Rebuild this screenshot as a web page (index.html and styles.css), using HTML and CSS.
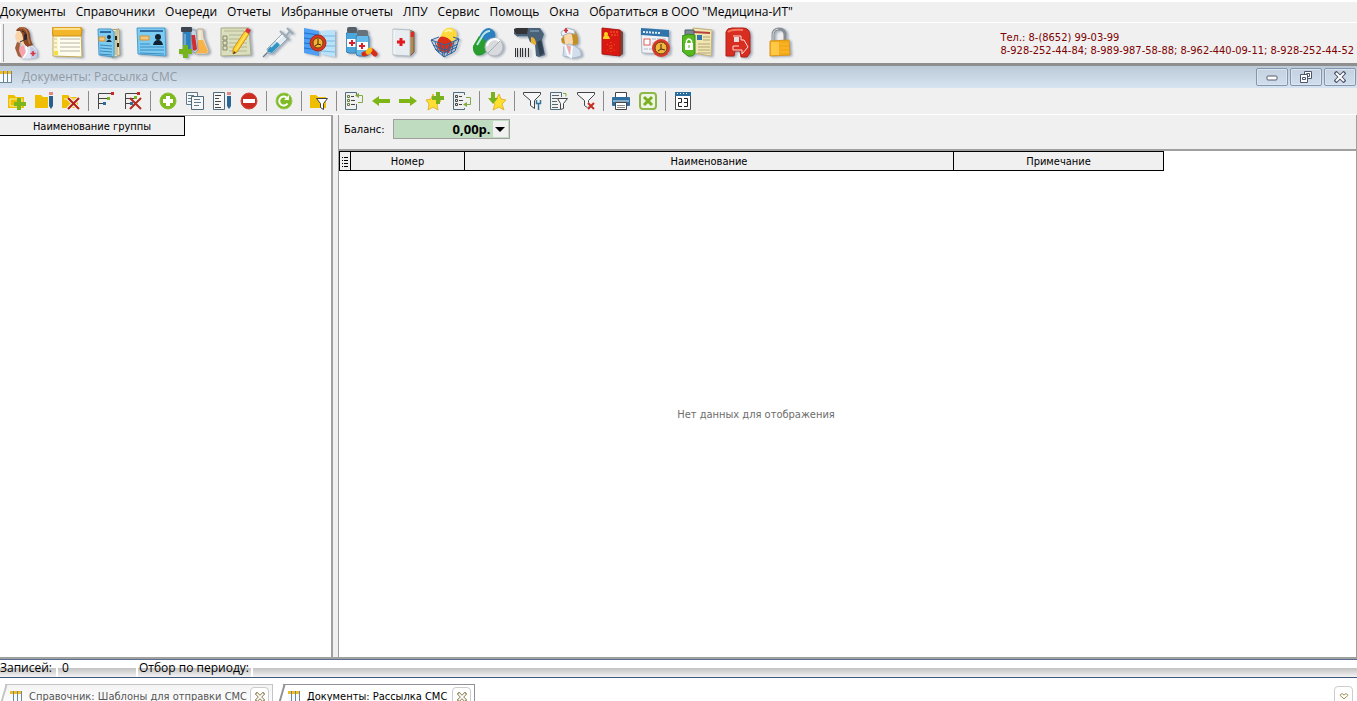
FILE: index.html
```
<!DOCTYPE html>
<html lang="ru">
<head>
    <meta charset="UTF-8">
    <meta name="viewport" content="width=device-width, initial-scale=1.0">
    <title>Документы: Рассылка СМС</title>
    <link rel="stylesheet" href="styles.css">
</head>
<body>

    <!-- Main menu -->
    <nav class="menu">
        <button>Документы</button>
        <button>Справочники</button>
        <button>Очереди</button>
        <button>Отчеты</button>
        <button>Избранные отчеты</button>
        <button>ЛПУ</button>
        <button>Сервис</button>
        <button>Помощь</button>
        <button>Окна</button>
        <button>Обратиться в ООО "Медицина-ИТ"</button>
    </nav>

    <!-- Main toolbar -->
    <div class="main-toolbar">
        <span class="grip"></span>
        <div class="big-icons">
            <button aria-label="Регистратура"><svg viewBox="0 0 32 32"><path d="M12 18l5-3 4 3q6 3 6 8v4q-7 3-17 1l-2-9z" fill="#e3e8f4"/><path d="M20 19q6 3 7 7v4l-6 1z" fill="#c3cbe2"/><path d="M9 20l5-2 2 9-4 4-3-4z" fill="#f5a3ae"/><path d="M6 6q3-4 7-1l2 9-2 5-3-4H7L5 10z" fill="#fbd3a8"/><path d="M6 4q1-4 7-4 6 1 7 7 0 6 3 11l-6 2q-4-3-4-9 0-4-3-7z" fill="#8b4a24"/><path d="M9 1q4-1 6 1 3 3 3 9l2 6" stroke="#b5714a" stroke-width="1.500" fill="none"/><path d="M7 15l-2 6 3 8 4 2-3-7 1-8z" fill="#a2603a"/><path d="M12 4q6 2 4 8l-6 3" stroke="#2c2a30" fill="none"/><rect x="14" y="7" width="3" height="6" rx="1" fill="#2c2a30"/><path d="M16 19l1 6-4 6" stroke="#fff" fill="none" stroke-width="1.500"/><path d="M23 24v5m-2.500-2.500h5" stroke="#d8303c" stroke-width="1.500"/></svg></button>
            <button aria-label="Расписание"><svg viewBox="0 0 32 32"><path d="M1 2h28l1 28-29-1z" fill="#fffdee" stroke="#c3ab52"/><path d="M0 2q0-2 2-2h26q2 0 2 3l-1 6H1z" fill="#f3b52c" stroke="#c8901a"/><path d="M2 2h26" stroke="#ffe08a" stroke-width="2"/><path d="M2 10h4v18H2z" fill="#fff7c8"/><path d="M8 12h20M8 16h20M8 20h20M8 24h20" stroke="#b7b5a6"/><path d="M2 12h3m-3 4h3m-3 4h3" stroke="#c8c4a8"/><rect x="2" y="24" width="4" height="4" fill="#f4e03c"/></svg></button>
            <button aria-label="Картотека"><svg viewBox="0 0 32 32"><path d="M17 3l8-1 1 26-8 3z" fill="#e9e3c0" stroke="#a69c70"/><path d="M21 4v24m2-25v25" stroke="#b1a67a"/><path d="M4 2h13l3 3v25L5 28z" fill="#7ecbf2" stroke="#4a9ac8"/><path d="M6 5h11" stroke="#2b6a9c" stroke-width="2"/><rect x="5" y="10" width="6" height="4" fill="#f5c977" stroke="#d2933b"/><circle cx="15" cy="10" r="2" fill="#12283d"/><path d="M12 15q3-5 6 0z" fill="#12283d"/><path d="M6 18l12 1M6 21l12 1M6 24l12 1M6 27l12 1" stroke="#3d88b8"/><path d="M22 9v4m2 3v4" stroke="#222" stroke-width="2"/></svg></button>
            <button aria-label="Карта пациента"><svg viewBox="0 0 32 32"><path d="M1 1h28l1 28-28-2z" fill="#7bcbf3" stroke="#4a9ccc"/><path d="M4 4h23" stroke="#2f6ea2" stroke-width="2"/><rect x="4" y="9" width="9" height="4" fill="#f6c77a" stroke="#d2953b"/><circle cx="22" cy="10" r="3" fill="#10222f"/><path d="M17 18q1-5 5-5t5 5z" fill="#10222f"/><path d="M4 17h10M4 20h24M4 23h24M4 26l24 1" stroke="#3f8cbd"/></svg></button>
            <button aria-label="Лаборатория"><svg viewBox="0 0 32 32"><path d="M19 2h6l1 9 5 13q0 3-3 3H17l2-16z" fill="#eadfc4" stroke="#b5ad98"/><path d="M20 13h5l5 11q0 2-2 2H18z" fill="#f7b24a"/><path d="M12 3h6l2 20q-2 4-5 2z" fill="#c7d6e4" stroke="#8a9fb2"/><path d="M13 8h4l2 14q-2 3-4 1z" fill="#cf2c34"/><path d="M5 3h8v19q-4 5-8 0z" fill="#2d82bd" stroke="#7790a6"/><rect x="3" y="0" width="11" height="5" rx="1" fill="#3d4551"/><path d="M7 7v12M22 4v9" stroke="#fff" opacity=".6"/><path d="M5 18h5v4h4v5h-4v4H5v-4H1v-5h4z" fill="#76b41b"/></svg></button>
            <button aria-label="Записи"><svg viewBox="0 0 32 32"><path d="M1 1h28l2 27-30 1z" fill="#dcdfbd" stroke="#a9ab86"/><path d="M9 8h18M9 12h18M9 16h18M9 20h18M9 24h18M4 4h20" stroke="#b2b592"/><path d="M3 9h4v4H3zm0 5h4v4H3zm0 5h4v4H3z" fill="none" stroke="#85896a"/><path d="M13 22L25 4l4 3-12 18-4 2z" fill="#ffd02e" stroke="#cf9018"/><path d="M16 23L27 6" stroke="#fff07f"/><path d="M25 4l2-3 4 2-2 4z" fill="#d8323a"/><path d="M13 27l1-3 2 2z" fill="#40372b"/></svg></button>
            <button aria-label="Прививки"><svg viewBox="0 0 32 32"><path d="M1 30l6-6" stroke="#68808d" stroke-width="1.500"/><path d="M5 22L21 6l5 5L10 27l-4-1z" fill="#e3ebf0" stroke="#93a9b6"/><path d="M6 22l8-8 4 4-8 8-4-1z" fill="#3192c4"/><path d="M18 4l9 9M24 9l4-5m-3-3l6 6" stroke="#9aa9b3" stroke-width="2"/><path d="M9 20L21 8" stroke="#fff" stroke-width="1.500" opacity=".8"/></svg></button>
            <button aria-label="График приема"><svg viewBox="0 0 32 32"><path d="M0 1l15 3v25L0 26z" fill="#4c9ff2"/><path d="M17 4l14-1v27l-14-3z" fill="#b9e2fb"/><path d="M0 6l15 2M0 11l15 2M0 16l15 2M0 21l15 2" stroke="#1f6fd0"/><path d="M17 9h14M17 14h14M17 19h14M17 24l14 1" stroke="#79b9e4"/><circle cx="14" cy="16" r="8" fill="#d9371e" stroke="#a52a18"/><circle cx="14" cy="16" r="5" fill="#f3b537" stroke="#6e4310"/><path d="M14 12v5l3 1m-3-1l-3 2" stroke="#452a08" fill="none"/></svg></button>
            <button aria-label="Лекарства"><svg viewBox="0 0 32 32"><rect x="0" y="5" width="12" height="21" rx="3" fill="#4ba6dc" stroke="#3b7fae"/><rect x="1" y="0" width="10" height="6" rx="2" fill="#555f68"/><rect x="1" y="12" width="11" height="8" fill="#fff"/><rect x="10" y="8" width="13" height="21" rx="3" fill="#65bbea" stroke="#3b7fae"/><rect x="11" y="3" width="11" height="6" rx="2" fill="#68727a"/><rect x="11" y="15" width="11" height="8" fill="#fff"/><path d="M6 13v6m-3-3h6M16 16v6m-3-3h6" stroke="#d9202a" stroke-width="2"/><path d="M18 27l3-1m5-2l3 3" stroke="#d82b18" stroke-width="5" stroke-linecap="round"/><path d="M22 25l2-2" stroke="#f4ba19" stroke-width="5" stroke-linecap="round"/></svg></button>
            <button aria-label="Медкарта"><svg viewBox="0 0 32 32"><path d="M21 3l5 2v20l-4 4z" fill="#b08a55" stroke="#7c5a32"/><path d="M22 5h4v5h-4z" fill="#dc2f23"/><path d="M5 2l17 1v26L5 28z" fill="#e7edf1" stroke="#b4bfc6"/><path d="M6 3v24" stroke="#fff"/><path d="M13 11v8m-4-4h8" stroke="#e21a20" stroke-width="3"/></svg></button>
            <button aria-label="Аптека"><svg viewBox="0 0 32 32"><path d="M12 6q3-6 10-5 7 3 4 10l-4 6-12-6z" fill="#ffd83a"/><path d="M10 10q6-2 13 6l-4 10-9-2q-6-7 0-14z" fill="#dd3018"/><path d="M15 5q3-3 7-1" stroke="#fff6a8" stroke-width="2" fill="none"/><path d="M1 13l14 5 14-6-4 12-11 6-8-7zM15 18l-1 12M5 15l4 11M10 17l3 12M20 16l-3 12m7-14l-3 13M3 18l12 5 13-6M5 22l9 4 13-6M1 13l8-3m20 2l-6-2" fill="none" stroke="#2b639c"/></svg></button>
            <button aria-label="Препараты"><svg viewBox="0 0 32 32"><path d="M7 10q4-9 10-9 8 2 6 11l-7 10z" fill="#2a80c0"/><path d="M7 9l11 8-4 8q-5 5-10 3-4-4-3-9z" fill="#2a9d30"/><path d="M5 18l6-10q3-4 7-4" stroke="#b8e8e0" stroke-width="2" fill="none"/><circle cx="22" cy="20" r="9" fill="#d8dade" stroke="#b4b6bc"/><path d="M15 19q1-6 8-7 3 0 5 3" stroke="#fff" stroke-width="2" fill="none"/><path d="M16 26l12-12" stroke="#a9adb3"/></svg></button>
            <button aria-label="Сканер"><svg viewBox="0 0 32 32"><path d="M0 2l3-1h23l4 6-2 6 3 15-6 2-3-1-1-12-5-2-2-5H4L0 7z" fill="#4a6277"/><path d="M0 2l3-1h11l-1 6H2z" fill="#343335"/><path d="M4 9h10v1H4z" fill="#8ca4b4"/><path d="M23 15l4-2 3 13-4 3z" fill="#30404e"/><path d="M17 10q5 0 5 8l-5-2z" fill="#efb02b"/><path d="M16 4h9" stroke="#94b2c5"/><path d="M1.500 21v9m2-9v9m3-9v9m2-9v9m3-9v9m3-9v9" stroke="#333"/></svg></button>
            <button aria-label="Медсестра"><svg viewBox="0 0 32 32"><path d="M7 6q4-6 12-2 4 5 3 13l-7 2q-3-6-8-10z" fill="#c08f2c"/><path d="M5 12l3-3 1 8-3-1z" fill="#c08f2c"/><path d="M8 8q5-4 8 0l1 7-1 5-4 1-3-5z" fill="#fbd8ac"/><path d="M5 5l6-4 7 2 1 4-6-1-7 3z" fill="#eef3fa" stroke="#a8b5c4"/><path d="M10 1v5M8 3.500h4" stroke="#d72226" stroke-width="1.500"/><path d="M8 19l5-2 6 2q6 3 6 7v3l-7 2-11-2z" fill="#d3deec" stroke="#a9b8ca"/><path d="M10 18l6 2-2 8z" fill="#f2a9a6"/><path d="M9 18l3 10 3 2 1-11" fill="none" stroke="#f7fbff" stroke-width="2"/></svg></button>
            <button aria-label="Паспорт"><svg viewBox="0 0 32 32"><path d="M22 3l3 2v22l-3 2z" fill="#784437"/><path d="M4 1l18 2v26L4 27z" fill="#d91812" stroke="#b01812"/><circle cx="8" cy="7" r="2" fill="#ffd421"/><path d="M5 12q0-4 3-4t4 4z" fill="#ffd421"/><path d="M12 5h8m-7 3h7" stroke="#f36b28" stroke-dasharray="2 1"/><path d="M9 17l8 7m0-7l-8 7m4-9v11" stroke="#ee6a22" stroke-dasharray="1 2"/></svg></button>
            <button aria-label="Журнал"><svg viewBox="0 0 32 32"><path d="M1 3l27 1 1 23-27-1z" fill="#f1f3f7" stroke="#a9b5c1"/><path d="M1 1l28 2v7L1 8z" fill="#2f74aa"/><path d="M3 5l17 1" stroke="#dfeaf3" stroke-width="2" stroke-dasharray="2 1"/><rect x="4" y="12" width="6" height="6" fill="#fff" stroke="#dd5f58"/><path d="M12 12h15M12 16h6M4 22h8" stroke="#b2bac4" stroke-dasharray="4 1"/><circle cx="21" cy="21" r="9" fill="#d93a2a"/><circle cx="21" cy="21" r="6" fill="#f2b63c" stroke="#664015"/><path d="M21 17v5l-3 2m3-2l4 1" stroke="#3f270b" fill="none"/></svg></button>
            <button aria-label="Электронная подпись"><svg viewBox="0 0 32 32"><path d="M11 1l19 2-1 26-18-3z" fill="#f0e6b4" stroke="#c2b27c"/><path d="M12 5l16 1" stroke="#b8433a" stroke-width="2"/><rect x="15" y="8" width="5" height="5" fill="#2c76a8"/><path d="M21 10h7m-7 3h7M16 17h12M16 20h12M16 23h12M16 26h12" stroke="#b5a474"/><path d="M3 3h9v8H3z" fill="#7b8894" stroke="#4c5a66"/><path d="M0 9q6-3 13-1v18q-2 4-7 3l-6-5z" fill="#55b81e" stroke="#37861b"/><path d="M3 16h8v7H3z" fill="#fff"/><path d="M4.500 17v-3q2-4 5 0v3" fill="none" stroke="#fff" stroke-width="1.500"/><path d="M7 18v3" stroke="#55b81e"/></svg></button>
            <button aria-label="Выход"><svg viewBox="0 0 32 32"><path d="M2 5q1-4 6-4h11q7 0 7 8v17l-3 4h-6l-1-6h-5l-1 5H2z" fill="#d82d21" stroke="#b02219"/><path d="M4 5q3-3 15-2" fill="none" stroke="#f57a61" stroke-width="2"/><path d="M10 10h5v5h-5z" fill="#e8e0de"/><path d="M9 9h8v4h3l4 7-6 7v-4H9v-4h6" fill="none" stroke="#ffddd5"/></svg></button>
            <button aria-label="Блокировка"><svg viewBox="0 0 32 32"><path d="M7 15V8q0-6 6-6t6 6v7" fill="none" stroke="#868d94" stroke-width="3"/><path d="M7 14V8q0-5 5-6" fill="none" stroke="#d8dde0"/><path d="M4 14l19-1 1 15-20 1z" fill="#f6aa16" stroke="#dc951b"/><path d="M5 15h8v13H5z" fill="#ffc845"/><path d="M14 17h9M14 21h9M14 25h9" stroke="#fbb83a"/></svg></button>
        </div>
        <div class="phones">Тел.: 8-(8652) 99-03-99<br>8-928-252-44-84; 8-989-987-58-88; 8-962-440-09-11; 8-928-252-44-52</div>
    </div>

    <!-- Window caption -->
    <header class="caption">
        <svg class="grid-icon" viewBox="0 0 12 12"><path d="M0 0h12v12H0z" fill="#6d8799"/><path d="M0 0h3v3H0zm4 0h3v3H4zm4 0h3v3H8z" fill="#f0bd24"/><path d="M0 3h3v8H0zm4 0h3v8H4zm4 0h3v8H8z" fill="#f6fafc"/></svg>
        <h1>Документы: Рассылка СМС</h1>
        <div class="caption-buttons">
            <button aria-label="Свернуть"><svg viewBox="0 0 12 12"><rect x="1" y="5" width="10" height="4" rx="1" fill="#fff" stroke="#555c6c"/></svg></button>
            <button aria-label="Восстановить"><svg viewBox="0 0 12 12"><path d="M4.500.5h7v7h-7z" fill="#fff" stroke="#4e566b"/><path d="M6.500 2.500h3v3h-3z" fill="none" stroke="#4e566b"/><path d="M.5 3.500h7v8h-7z" fill="#fff" stroke="#4e566b"/><path d="M2.500 6.500h3v2h-3z" fill="none" stroke="#4e566b"/></svg></button>
            <button aria-label="Закрыть"><svg viewBox="0 0 12 12"><path d="M1 1l10 10m0-10L1 11" stroke="#4e566b" stroke-width="4"/><path d="M2 2l8 8m0-8l-8 8" stroke="#fff" stroke-width="2"/></svg></button>
        </div>
    </header>

    <!-- Document toolbar -->
    <div class="doc-toolbar">
        <button aria-label="Добавить группу"><svg viewBox="0 0 20 20"><path d="M1 4h6l2 2h8v11H1z" fill="#efbe00"/><path d="M3 8h12v7H3z" fill="none" stroke="#fff2a8"/><path d="M10 7h4v4h5v4h-5v4h-4v-4H7v-4h3z" fill="#7ab51d"/></svg></button>
        <button aria-label="Изменить группу"><svg viewBox="0 0 20 20"><path d="M1 4h6l2 2h8v11H1z" fill="#efbe00"/><path d="M14 1h5v17h-5z" fill="#f0f0f0"/><path d="M15 1h4v3h-4z" fill="#e38983"/><path d="M15 5h4v10l-2 3-2-3z" fill="#285f8c"/></svg></button>
        <button aria-label="Удалить группу"><svg viewBox="0 0 20 20"><path d="M1 4h6l2 2h8v11H1z" fill="#efbe00"/><path d="M3 8h12" stroke="#fff2a8"/><path d="M7 7l11 11M18 7L7 18" stroke="#f0f0f0" stroke-width="4"/><path d="M7 7l11 11M18 7L7 18" stroke="#b41d16" stroke-width="2"/></svg></button>
        <span class="sep"></span>
        <button aria-label="Развернуть"><svg viewBox="0 0 20 20"><path d="M2.500 18V2.500H15M2.500 7.500H11M2.500 12.500H7" fill="none" stroke="#444"/><path d="M15 1h3v3h-3z" fill="#c9281f"/><path d="M11 6h3v3h-3z" fill="#79b51e"/><path d="M7 11h3v3H7z" fill="#286e9f"/></svg></button>
        <button aria-label="Свернуть дерево"><svg viewBox="0 0 20 20"><path d="M2.500 18V2.500H15M2.500 7.500H11M2.500 12.500H7" fill="none" stroke="#444"/><path d="M14 1h3v3h-3z" fill="#c9281f"/><path d="M11 5h3v3h-3z" fill="#79b51e"/><path d="M7 11h3v3H7z" fill="#286e9f"/><path d="M7 7l11 11M18 7L7 18" stroke="#b52c1f" stroke-width="2"/></svg></button>
        <span class="sep"></span>
        <button aria-label="Добавить"><svg viewBox="0 0 20 20"><circle cx="10" cy="10" r="8" fill="#80b91d" stroke="#8cbf3a"/><path d="M10 5v10M5 10h10" stroke="#fff" stroke-width="4"/></svg></button>
        <button aria-label="Копировать"><svg viewBox="0 0 20 20"><path d="M1.500 1.500h11v12h-11z" fill="#f7f7f7" stroke="#607c8c"/><path d="M3 4.500h6m-6 3h3m-3 3h3" stroke="#607c8c"/><path d="M6.500 5.500h12v13h-12z" fill="#f7f7f7" stroke="#506b7b"/><path d="M9 8.500h6m-6 3h7m-7 3h5" stroke="#607c8c"/></svg></button>
        <button aria-label="Изменить"><svg viewBox="0 0 20 20"><path d="M1.500 1.500h11v17h-11z" fill="#f7f7f7" stroke="#506b7b"/><path d="M3 4.500h6m-6 3h4m-4 3h6m-6 3h4m-4 3h6" stroke="#444"/><path d="M15 1h4v3h-4z" fill="#e38983"/><path d="M15 5h4v10l-2 3-2-3z" fill="#286695"/></svg></button>
        <button aria-label="Удалить"><svg viewBox="0 0 20 20"><circle cx="10" cy="10" r="8" fill="#cc2c20" stroke="#cf4a40"/><path d="M4 10h12" stroke="#fff" stroke-width="4"/></svg></button>
        <span class="sep"></span>
        <button aria-label="Обновить"><svg viewBox="0 0 20 20"><circle cx="10" cy="10" r="8" fill="#7ebb24" stroke="#9ac95a"/><path d="M13.500 12.500a4.500 4.500 0 1 1-1-6" fill="none" stroke="#fff" stroke-width="2"/><path d="M15 4v5h-5z" fill="#fff"/></svg></button>
        <span class="sep"></span>
        <button aria-label="Фильтр по группе"><svg viewBox="0 0 20 20"><path d="M1 4h6l2 2h8v11H1z" fill="#efbe00"/><path d="M7.500 7.500h11l-4 5v6l-3-2v-4z" fill="#fff" stroke="#3e4246"/></svg></button>
        <span class="sep"></span>
        <button aria-label="Загрузить список"><svg viewBox="0 0 20 20"><path d="M12.500 4V1.500h-11v17h11V13" fill="none" stroke="#4f6d7e"/><path d="M3.500 4.500h2v2h-2zm0 4h2v2h-2zm0 4h2v2h-2z" fill="none" stroke="#657c3c"/><path d="M7 5.500h3m-3 4h4m-4 4h4" stroke="#444"/><path d="M14 11.500h4.500v-7H14" fill="none" stroke="#83aa43"/><path d="M15 2v5l-4-2.500z" fill="#83aa43"/></svg></button>
        <button aria-label="Назад"><svg viewBox="0 0 20 20"><path d="M1 10l7-5v3h11v4H8v3z" fill="#7eb615"/></svg></button>
        <button aria-label="Вперед"><svg viewBox="0 0 20 20"><path d="M19 10l-7-5v3H1v4h11v3z" fill="#7eb615"/></svg></button>
        <button aria-label="В избранное"><svg viewBox="0 0 20 20"><path d="M8 3l2 5 6 2-4 4 1 5-5-3-5 3 1-6-3-4 5-1z" fill="#ffdf35" stroke="#e3b52e"/><path d="M11 1h4v4h4v4h-4v4h-4V9H7V5h4z" fill="#79b21c"/></svg></button>
        <button aria-label="Выгрузить список"><svg viewBox="0 0 20 20"><path d="M12.500 4V1.500h-11v17h11V17" fill="none" stroke="#4f6d7e"/><path d="M3.500 4.500h2v2h-2zm0 4h2v2h-2zm0 4h2v2h-2z" fill="none" stroke="#444"/><path d="M7 5.500h3m-3 4h4m-4 4h3" stroke="#444"/><path d="M14 6.500h4.500v7H14" fill="none" stroke="#83aa43"/><path d="M15 11v5l-4-2.500z" fill="#83aa43"/></svg></button>
        <span class="sep"></span>
        <button aria-label="Из избранного"><svg viewBox="0 0 20 20"><path d="M12 3l2 5 5 1-4 4 2 6-5-3-6 3 2-6-4-5 6-1z" fill="#ffe02f" stroke="#e3b52e"/><path d="M4 1h4v6h3l-5 6-5-6h3z" fill="#79b21c"/></svg></button>
        <span class="sep"></span>
        <button aria-label="Настроить фильтр"><svg viewBox="0 0 20 20"><path d="M1.500 1.500h17v2l-6 6v8l-4-3v-5l-7-6z" fill="#f7f7f7" stroke="#414448"/><path d="M14 9h5v10h-5z" fill="#f0f0f0"/><path d="M14.500 9v3.500h4V9M16.500 12v7" fill="none" stroke="#34749b" stroke-width="1.500"/></svg></button>
        <button aria-label="Фильтр"><svg viewBox="0 0 20 20"><path d="M12.500 6V1.500h-11v17H11" fill="none" stroke="#4f6d7e"/><path d="M3 4.500h7m-7 3h5m-5 3h5m-5 3h6m-6 3h6" stroke="#59636a"/><path d="M14 2.500h3v3" fill="none" stroke="#7da936"/><path d="M8.500 7.500h10l-4 5v5l-3 1v-6z" fill="#f7f7f7" stroke="#414448"/></svg></button>
        <button aria-label="Снять фильтр"><svg viewBox="0 0 20 20"><path d="M1.500 1.500h17v2l-6 6v8l-4-3v-5l-7-6z" fill="#f7f7f7" stroke="#414448"/><path d="M12 12l7 7m0-7l-7 7" stroke="#f0f0f0" stroke-width="4"/><path d="M12 12l6 6m0-6l-6 6" stroke="#c52c20" stroke-width="2"/></svg></button>
        <span class="sep"></span>
        <button aria-label="Печать"><svg viewBox="0 0 20 20"><path d="M4.500 7V1.500h11V7" fill="#fff" stroke="#444"/><rect x="1" y="6" width="18" height="9" rx="1" fill="#2e6f9f"/><path d="M2 10h16" stroke="#dfe8ee"/><path d="M4.500 11.500h11v7h-11z" fill="#fff" stroke="#444"/><path d="M6 14.500h8m-8 2h8" stroke="#888"/></svg></button>
        <button aria-label="Экспорт в Excel"><svg viewBox="0 0 20 20"><rect x="2" y="2" width="16" height="16" rx="3" fill="#eff5e6" stroke="#8db747" stroke-width="2"/><path d="M6 6l8 8m0-8l-8 8" stroke="#7caf1d" stroke-width="3"/></svg></button>
        <span class="sep"></span>
        <button aria-label="Календарь"><svg viewBox="0 0 20 20"><path d="M2.500 1.500h15v17h-15z" fill="#fff" stroke="#4a4d50"/><path d="M2 1h16v4H2z" fill="#286e9f"/><path d="M4 2.500h12" stroke="#fff" stroke-dasharray="1 2"/><path d="M5 7.500h3.500v4h-3v4H9M11 7.500h3.500v8H11m0-4h3" fill="none" stroke="#222"/></svg></button>
    </div>

    <main class="panes">
        <section class="groups">
            <table class="grid groups-grid">
                <thead>
                    <tr><th>Наименование группы</th></tr>
                </thead>
            </table>
        </section>

        <section class="messages">
            <div class="balance">
                <label for="balance">Баланс:</label>
                <div class="combo">
                    <input type="text" id="balance" value="0,00р.">
                    <button aria-label="Открыть"></button>
                </div>
            </div>
            <table class="grid messages-grid">
                <thead>
                    <tr>
                        <th class="col-menu"><svg viewBox="0 0 8 12"><path d="M0 1.500h1m1 0h4M0 4.500h1m1 0h4M0 7.500h1m1 0h4M0 10.500h1m1 0h4" stroke="#000"/></svg></th>
                        <th class="col-number">Номер</th>
                        <th class="col-name">Наименование</th>
                        <th class="col-note">Примечание</th>
                    </tr>
                </thead>
            </table>
            <div class="no-data">Нет данных для отображения</div>
        </section>
    </main>

    <!-- Status bar -->
    <footer class="status">
        <span class="status-label">Записей:</span>
        <span class="status-count">0</span>
        <span class="status-period">Отбор по периоду:</span>
        <span class="status-rest"></span>
    </footer>

    <!-- Open windows -->
    <div class="tabs">
        <div class="tab tab-wide">
            <svg class="grid-icon" viewBox="0 0 12 12"><path d="M0 0h12v12H0z" fill="#6d8799"/><path d="M0 0h3v3H0zm4 0h3v3H4zm4 0h3v3H8z" fill="#f0bd24"/><path d="M0 3h3v8H0zm4 0h3v8H4zm4 0h3v8H8z" fill="#f6fafc"/></svg>
            <a href="#">Справочник: Шаблоны для отправки СМС</a>
            <button aria-label="Закрыть вкладку"><svg viewBox="0 0 12 12"><path d="M1 1l10 10m0-10L1 11" stroke="#8b7d4b" stroke-width="4"/><path d="M2 2l8 8m0-8l-8 8" stroke="#fff" stroke-width="2"/></svg></button>
        </div>
        <div class="tab">
            <svg class="grid-icon" viewBox="0 0 12 12"><path d="M0 0h12v12H0z" fill="#6d8799"/><path d="M0 0h3v3H0zm4 0h3v3H4zm4 0h3v3H8z" fill="#f0bd24"/><path d="M0 3h3v8H0zm4 0h3v8H4zm4 0h3v8H8z" fill="#f6fafc"/></svg>
            <a href="#">Документы: Рассылка СМС</a>
            <button aria-label="Закрыть вкладку"><svg viewBox="0 0 12 12"><path d="M1 1l10 10m0-10L1 11" stroke="#8b7d4b" stroke-width="4"/><path d="M2 2l8 8m0-8l-8 8" stroke="#fff" stroke-width="2"/></svg></button>
        </div>
        <button class="tabs-menu" aria-label="Список окон"><svg viewBox="0 0 12 12"><path d="M2.500 3.500h2L6 5l1.500-1.500h2l1 1v1L6 9.500l-4.500-4v-1z" fill="#fff" stroke="#8b7d2f"/></svg></button>
    </div>

</body>
</html>
```
FILE: styles.css
```
* {
    margin: 0;
    padding: 0;
    box-sizing: border-box;
}

body {
    display: flex;
    flex-direction: column;
    height: 100vh;
    overflow: hidden;
    border-top: 2px solid white;
    background-color: #f0f0f0;
    color: #000;
    font-family: "DejaVu Sans Condensed", "DejaVu Sans", sans-serif;
    font-size: 11px;
}

button {
    border: none;
    background: none;
    font: inherit;
    color: inherit;
}

svg {
    display: block;
}

/* Menu */
.menu {
    display: flex;
    gap: 10px;
    height: 20px;
    font-family: "Open Sans", sans-serif;
    font-size: 12px;
    line-height: 20px;
    white-space: nowrap;
}

/* Main toolbar */
.main-toolbar {
    display: flex;
    align-items: center;
    height: 44px;
    border-top: 1px solid white;
    border-bottom: 3px solid #8f8f8f;
}

.grip {
    width: 4px;
    height: 38px;
    margin-right: 6px;
    border-right: 1px solid #a0a0a0;
    border-left: 1px solid white;
}

.big-icons {
    display: flex;
    gap: 10px;
}

.big-icons svg {
    width: 32px;
    height: 32px;
    filter: drop-shadow(2px 1px 1px rgba(50, 75, 110, 0.4));
}

.phones {
    margin-left: auto;
    padding: 2px 3px 0 0;
    line-height: 13px;
    color: #7d0000;
    white-space: nowrap;
}

/* Window caption */
.caption {
    display: flex;
    align-items: center;
    height: 22px;
    background: linear-gradient(#bccad8, #d6e3f1);
}

.grid-icon {
    width: 12px;
    height: 12px;
}

.caption h1 {
    margin-left: 10px;
    font-family: "Open Sans", sans-serif;
    font-size: 12px;
    font-weight: normal;
    line-height: 16px;
    color: #929aa3;
}

.caption-buttons {
    display: flex;
    gap: 2px;
    margin-left: auto;
    padding-right: 1px;
}

.caption-buttons button {
    display: grid;
    place-items: center;
    width: 32px;
    height: 18px;
    border: 1px solid #8496ae;
    border-radius: 2px;
    background: linear-gradient(#c5d1df, #d0deed);
    box-shadow: inset 0 0 0 1px #dbe5f0;
}

.caption-buttons svg {
    width: 12px;
    height: 12px;
}

/* Document toolbar */
.doc-toolbar {
    display: flex;
    align-items: center;
    height: 27px;
    padding-left: 4px;
    border-bottom: 1px solid white;
}

.doc-toolbar button {
    width: 27px;
    padding: 0 3px;
}

.doc-toolbar svg {
    width: 20px;
    height: 20px;
}

.sep {
    width: 8px;
    height: 20px;
    background: linear-gradient(#8c8c8c, #8c8c8c) 3px 0 / 1px 100% no-repeat;
}

/* Panes */
.panes {
    display: flex;
    flex: 1;
    gap: 5px;
    min-height: 0;
    border-bottom: 2px solid #a0a0a0;
}

.groups {
    width: 333px;
    border-top: 1px solid #a0a0a0;
    border-right: 2px solid #a0a0a0;
    background-color: white;
}

.messages {
    display: flex;
    flex: 1;
    flex-direction: column;
    border-right: 1px solid #a0a0a0;
    border-left: 1px solid #a0a0a0;
    background-color: white;
}

.balance {
    display: flex;
    align-items: center;
    gap: 8px;
    height: 36px;
    padding: 0 5px 6px;
    border-bottom: 2px solid #a0a0a0;
    background-color: #f0f0f0;
}

.combo {
    display: flex;
    width: 117px;
    height: 20px;
    padding: 1px;
    border: 1px solid #a0a0a0;
    background-color: #c0dcc0;
}

.combo input {
    width: 98px;
    padding-right: 2px;
    border: none;
    background: none;
    font: bold 13px "Noto Sans", sans-serif;
    text-align: right;
}

.combo button {
    display: grid;
    place-items: center;
    width: 17px;
    background-color: #f0f0f0;
}

.combo button::before {
    content: "";
    border: 5px solid transparent;
    border-top-color: black;
    border-bottom: none;
}

/* Tables */
.grid {
    table-layout: fixed;
    border-collapse: collapse;
}

.grid th {
    height: 18px;
    padding-top: 2px;
    border: 1px solid black;
    background-color: #f0f0f0;
    font-weight: normal;
    line-height: 16px;
}

.grid th:first-child {
    border-left: none;
}

.groups-grid {
    width: 185px;
}

.messages-grid {
    width: 825px;
}

.messages-grid th:first-child {
    border-left: 1px solid black;
}

.col-menu {
    width: 11px;
}

.col-menu svg {
    width: 8px;
    height: 12px;
    margin-left: 2px;
}

.col-number {
    width: 114px;
}

.col-note {
    width: 210px;
}

.no-data {
    display: grid;
    flex: 1;
    place-items: center;
    width: 834px;
    color: #6d6d6d;
}

/* Status bar */
.status {
    display: flex;
    height: 19px;
    border-top: 1px solid #5c6f91;
    border-bottom: 1px solid #3f587e;
    background: linear-gradient(white 8px, #c2c2c2 8px, #f4f4f4);
    font-family: "Open Sans", sans-serif;
    font-size: 12px;
    line-height: 16px;
    white-space: nowrap;
}

.status span {
    border-right: 2px solid white;
}

.status-label {
    width: 58px;
}

.status-count {
    width: 80px;
    padding-left: 4px;
}

.status-period {
    width: 115px;
    padding-left: 1px;
}

.status .status-rest {
    flex: 1;
    border: none;
}

/* Window tabs */
.tabs {
    display: flex;
    gap: 10px;
    height: 23px;
    padding: 6px 4px 0 5px;
    background-color: white;
}

.tab {
    position: relative;
    display: flex;
    align-items: center;
    width: 192px;
    height: 24px;
    padding-left: 5px;
    border: solid #8e9195;
    border-width: 1px 1px 0 0;
    background-color: white;
    white-space: nowrap;
}

.tab-wide {
    width: 268px;
    border-color: #c4c4c4;
    background: linear-gradient(#f4f4f4, white);
    color: #555;
}

/* slanted left edge */
.tab::before {
    content: "";
    position: absolute;
    top: 0;
    left: -3px;
    width: 5px;
    height: 24px;
    border-left: 2px solid #8e9195;
    transform: skewX(-16deg);
}

.tab-wide::before {
    border-color: #c4c4c4;
}

.tab a {
    margin-left: 7px;
    color: inherit;
    line-height: 12px;
    text-decoration: none;
}

.tab button,
.tabs-menu {
    display: grid;
    place-items: center;
    width: 19px;
    height: 20px;
    margin-left: auto;
    margin-right: 3px;
    border: 1px solid #ccc;
    border-radius: 4px;
    background-color: white;
}

.tab button svg,
.tabs-menu svg {
    width: 10px;
    height: 10px;
}

.tabs .tabs-menu {
    margin-right: 0;
    margin-top: 2px;
}
```
